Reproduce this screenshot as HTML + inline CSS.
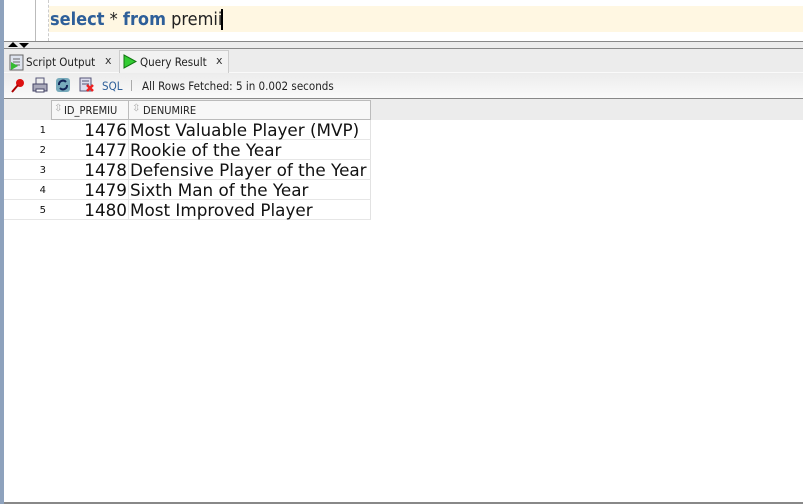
<!DOCTYPE html>
<html><head><style>
*{margin:0;padding:0;box-sizing:border-box}
body{width:803px;height:504px;overflow:hidden;background:#fff;font-family:"DejaVu Sans","Liberation Sans",sans-serif;position:relative}
.abs{position:absolute}
.c{font-family:"DejaVu Sans Condensed","DejaVu Sans",sans-serif}
</style></head><body>
<div class="abs" style="left:0;top:0;width:4px;height:504px;background:#8ea2bd"></div>
<div class="abs" style="left:35px;top:0;width:1px;height:41px;background:#bbb"></div>
<div class="abs" style="left:48px;top:0;width:0;height:41px;border-left:1px dashed #ccc"></div>
<div class="abs" style="left:49px;top:6px;width:754px;height:26px;background:#fff7e2"></div>
<div class="abs c" style="left:50px;top:8px;font-size:18px;line-height:24px;color:#222"><span style="color:#2e5f99;font-weight:bold">select</span> * <span style="color:#2e5f99;font-weight:bold">from</span> premii</div>
<div class="abs" style="left:221px;top:9px;width:2px;height:21px;background:#000"></div>
<div class="abs" style="left:4px;top:41px;width:799px;height:1px;background:#888"></div>
<div class="abs" style="left:4px;top:42px;width:799px;height:6px;background:#ececec"></div>
<div class="abs" style="left:4px;top:48px;width:799px;height:1px;background:#888"></div>
<div class="abs" style="left:8px;top:42px;width:0;height:0;border-left:5px solid transparent;border-right:5px solid transparent;border-bottom:5px solid #000"></div>
<div class="abs" style="left:19px;top:43px;width:0;height:0;border-left:5px solid transparent;border-right:5px solid transparent;border-top:5px solid #000"></div>
<div class="abs" style="left:4px;top:49px;width:799px;height:23px;background:#ececec"></div>
<div class="abs" style="left:4px;top:72px;width:799px;height:1px;background:#fafafa"></div>
<div class="abs" style="left:119px;top:50px;width:110px;height:23px;background:#f2f2f2;border:1px solid #ccc;border-bottom:none"></div>
<svg class="abs" style="left:9px;top:54px" width="16" height="17"><rect x="1" y="1" width="13" height="15" fill="#dde3ee" stroke="#666"/><path d="M4 5h7M4 8h7M4 11h7" stroke="#666"/><path d="M2 8l7 4-7 4z" fill="#3b3"/></svg>
<div class="abs c" style="left:26px;top:55px;font-size:11.5px;color:#222">Script Output</div>
<div class="abs" style="left:105px;top:54px;font-size:11px;color:#333">x</div>
<svg class="abs" style="left:123px;top:54px" width="14" height="15"><path d="M1 1l12 6.5-12 6.5z" fill="#3c3" stroke="#171"/></svg>
<div class="abs c" style="left:140px;top:55px;font-size:11.5px;color:#222">Query Result</div>
<div class="abs" style="left:216px;top:54px;font-size:11px;color:#333">x</div>
<div class="abs" style="left:4px;top:73px;width:799px;height:25px;background:linear-gradient(#ececec,#fafafa)"></div>
<div class="abs" style="left:4px;top:98px;width:799px;height:1px;background:#888"></div>
<svg class="abs" style="left:11px;top:78px" width="15" height="15"><circle cx="9" cy="5" r="4" fill="#d11"/><path d="M7 7l-6 7" stroke="#a00" stroke-width="2"/></svg>
<svg class="abs" style="left:32px;top:77px" width="16" height="16"><rect x="4" y="1" width="8" height="6" fill="#eee" stroke="#557"/><rect x="1" y="7" width="14" height="7" fill="#aab" stroke="#446"/><rect x="4" y="12" width="8" height="3" fill="#fff" stroke="#446"/></svg>
<svg class="abs" style="left:55px;top:77px" width="16" height="16"><rect x="1" y="1" width="14" height="14" rx="3" fill="#7ab" /><path d="M4 8a4 4 0 0 1 7-3M12 8a4 4 0 0 1-7 3" stroke="#125" stroke-width="2" fill="none"/></svg>
<svg class="abs" style="left:79px;top:77px" width="16" height="16"><rect x="1" y="1" width="11" height="13" fill="#dde" stroke="#557"/><path d="M3 4h7M3 7h7" stroke="#557"/><path d="M8 8l6 6M14 8l-6 6" stroke="#e22" stroke-width="2.5"/></svg>
<div class="abs c" style="left:102px;top:79px;font-size:11.5px;color:#2e5f99">SQL</div>
<div class="abs" style="left:131px;top:80px;width:1px;height:11px;background:#aaa"></div>
<div class="abs c" style="left:142px;top:79px;font-size:11.5px;color:#222">All Rows Fetched: 5 in 0.002 seconds</div>
<div class="abs" style="left:4px;top:99px;width:799px;height:21px;background:#ececec"></div>
<div class="abs" style="left:51px;top:100px;width:78px;height:20px;background:#f7f7f7;border:1px solid #bbb"></div>
<div class="abs" style="left:129px;top:100px;width:242px;height:20px;background:#f7f7f7;border:1px solid #bbb;border-left:none"></div>
<div class="abs" style="left:54px;top:103px;font-size:10px;color:#aaa">⇳</div>
<div class="abs c" style="left:64px;top:104px;font-size:11px;color:#222">ID_PREMIU</div>
<div class="abs" style="left:132px;top:103px;font-size:10px;color:#aaa">⇳</div>
<div class="abs c" style="left:143px;top:104px;font-size:11px;color:#222">DENUMIRE</div>
<div class="abs" style="left:4px;top:120px;font-size:16.8px;line-height:21px;color:#111">
<div style="display:flex;height:20px;border-bottom:1px solid #e6e6e6;width:367px;border-right:1px solid #e2e2e2"><span style="width:46px;text-align:right;font-size:10px;padding-right:4px">1</span><span style="width:79px;text-align:right;border-right:1px solid #e6e6e6;padding-right:1px">1476</span><span style="padding-left:1px">Most Valuable Player (MVP)</span></div>
<div style="display:flex;height:20px;border-bottom:1px solid #e6e6e6;width:367px;border-right:1px solid #e2e2e2"><span style="width:46px;text-align:right;font-size:10px;padding-right:4px">2</span><span style="width:79px;text-align:right;border-right:1px solid #e6e6e6;padding-right:1px">1477</span><span style="padding-left:1px">Rookie of the Year</span></div>
<div style="display:flex;height:20px;border-bottom:1px solid #e6e6e6;width:367px;border-right:1px solid #e2e2e2"><span style="width:46px;text-align:right;font-size:10px;padding-right:4px">3</span><span style="width:79px;text-align:right;border-right:1px solid #e6e6e6;padding-right:1px">1478</span><span style="padding-left:1px">Defensive Player of the Year</span></div>
<div style="display:flex;height:20px;border-bottom:1px solid #e6e6e6;width:367px;border-right:1px solid #e2e2e2"><span style="width:46px;text-align:right;font-size:10px;padding-right:4px">4</span><span style="width:79px;text-align:right;border-right:1px solid #e6e6e6;padding-right:1px">1479</span><span style="padding-left:1px">Sixth Man of the Year</span></div>
<div style="display:flex;height:20px;border-bottom:1px solid #e6e6e6;width:367px;border-right:1px solid #e2e2e2"><span style="width:46px;text-align:right;font-size:10px;padding-right:4px">5</span><span style="width:79px;text-align:right;border-right:1px solid #e6e6e6;padding-right:1px">1480</span><span style="padding-left:1px">Most Improved Player</span></div>
</div>
<div class="abs" style="left:4px;top:502px;width:799px;height:2px;background:#888"></div>
</body></html>
